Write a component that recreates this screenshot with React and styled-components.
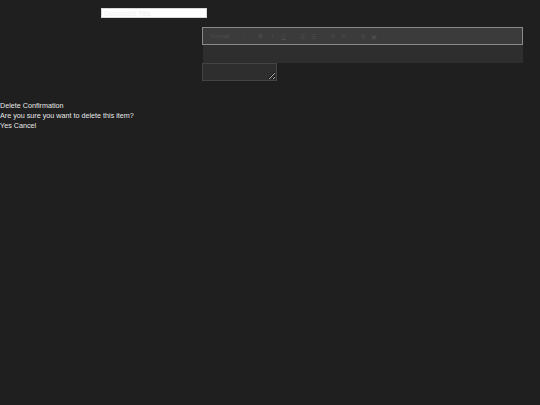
import React from "react";
import styled, { createGlobalStyle } from "styled-components";

const Global = createGlobalStyle`
  html, body {
    margin: 0;
    background: #1f1f1f;
    color: #e6e6e6;
    font-family: "Liberation Sans", Arial, sans-serif;
  }
`;

const Page = styled.div`
  display: flex;
  flex-direction: column;
  min-height: 405px;
`;

const Header = styled.div`
  display: flex;
  padding-left: 101px;
  padding-top: 8px;
`;

const TitleInput = styled.input`
  box-sizing: border-box;
  width: 106px;
  height: 10px;
  padding: 0 2px;
  border: 1px solid #d8d8d8;
  background: #ffffff;
  font: 7px "Liberation Sans", Arial, sans-serif;
  outline: none;
  &::placeholder {
    color: #f0f0f0;
  }
`;

const Body = styled.div`
  margin: 9px 0 0 202px;
  width: 321px;
  display: flex;
  flex-direction: column;
`;

const Toolbar = styled.div`
  box-sizing: border-box;
  height: 18px;
  display: flex;
  align-items: center;
  padding: 0 6px;
  background: #3b3b3b;
  border: 1px solid #8a8a8a;
  color: #4d4d4d;
  font-size: 6px;
`;

const Tool = styled.span`
  display: inline-flex;
  justify-content: center;
  width: ${(p) => p.$w || 11}px;
  margin-right: ${(p) => p.$gap || 0}px;
  font-weight: ${(p) => (p.$bold ? "bold" : "normal")};
  font-style: ${(p) => (p.$italic ? "italic" : "normal")};
  text-decoration: ${(p) => (p.$under ? "underline" : "none")};
`;

const Content = styled.div`
  height: 18px;
  background: #2e2e2e;
  margin-left: 1px;
`;

const Notes = styled.textarea`
  box-sizing: border-box;
  width: 75px;
  height: 18px;
  background: #2e2e2e;
  border: 1px solid #444;
  color: #ddd;
  color-scheme: dark;
  font-size: 7px;
  padding: 1px;
`;

const Dialog = styled.div`
  margin-top: 20px;
  font-size: 7.2px;
  line-height: 10px;
  color: #e6e6e6;
`;

const Line = styled.div``;

export default function App() {
  return (
    <Page>
      <Global />
      <Header>
        <TitleInput placeholder="Document Title" />
      </Header>
      <Body>
        <Toolbar>
          <Tool $w={22} $gap={7}>Normal</Tool>
          <Tool $gap={6}>⁝</Tool>
          <Tool $bold $gap={1}>B</Tool>
          <Tool $italic>I</Tool>
          <Tool $under $gap={8}>U</Tool>
          <Tool>☰</Tool>
          <Tool $gap={8}>☰</Tool>
          <Tool>A</Tool>
          <Tool $gap={8}>A</Tool>
          <Tool>⚲</Tool>
          <Tool>▣</Tool>
        </Toolbar>
        <Content />
        <Notes />
      </Body>
      <Dialog>
        <Line>Delete Confirmation</Line>
        <Line>Are you sure you want to delete this item?</Line>
        <Line>Yes Cancel</Line>
      </Dialog>
    </Page>
  );
}
